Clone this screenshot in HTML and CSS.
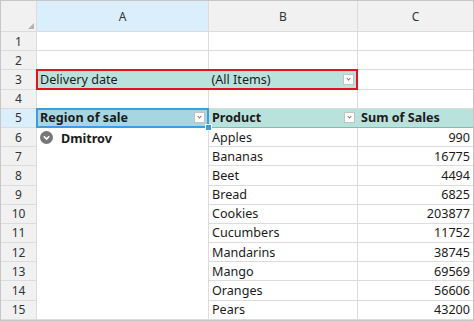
FILE: index.html
```html
<!DOCTYPE html>
<html lang="en">
<head>
    <meta charset="UTF-8">
    <title>Pivot table</title>
    <link rel="stylesheet" href="styles.css">
</head>
<body>
    <div class="sheet">
        <!-- column headers -->
        <div class="corner"></div>
        <div class="col-head active">A</div>
        <div class="col-head">B</div>
        <div class="col-head">C</div>

        <!-- rows 1-2 -->
        <div class="row-head">1</div><div class="cell"></div><div class="cell"></div><div class="cell"></div>
        <div class="row-head">2</div><div class="cell"></div><div class="cell"></div><div class="cell"></div>

        <!-- row 3: report filter -->
        <div class="row-head">3</div>
        <div class="cell filter span2">
            <div class="part part-a">Delivery date</div>
            <div class="part part-b">(All Items)<span class="drop"></span></div>
        </div>
        <div class="cell"></div>

        <!-- row 4 -->
        <div class="row-head">4</div><div class="cell"></div><div class="cell"></div><div class="cell"></div>

        <!-- row 5: pivot headers -->
        <div class="row-head active">5</div>
        <div class="cell pivot-head selected">Region of sale<span class="drop"></span><span class="handle"></span></div>
        <div class="cell pivot-head span2">
            <div class="part part-b">Product<span class="drop"></span></div>
            <div class="part">Sum of Sales</div>
        </div>

        <!-- rows 6-15 -->
        <div class="row-head">6</div>
        <div class="cell region">
            <span class="toggle">
                <svg width="13" height="13" viewBox="0 0 13 13"><circle cx="6.5" cy="6.5" r="6.5" fill="#777"/><path d="M3.8 5.3 L6.5 8 L9.2 5.3" fill="none" stroke="#fff" stroke-width="1.6"/></svg>
            </span>
            <b>Dmitrov</b>
        </div>
        <div class="cell">Apples</div><div class="cell num">990</div>
        <div class="row-head">7</div><div class="cell">Bananas</div><div class="cell num">16775</div>
        <div class="row-head">8</div><div class="cell">Beet</div><div class="cell num">4494</div>
        <div class="row-head">9</div><div class="cell">Bread</div><div class="cell num">6825</div>
        <div class="row-head">10</div><div class="cell">Cookies</div><div class="cell num">203877</div>
        <div class="row-head">11</div><div class="cell">Cucumbers</div><div class="cell num">11752</div>
        <div class="row-head">12</div><div class="cell">Mandarins</div><div class="cell num">38745</div>
        <div class="row-head">13</div><div class="cell">Mango</div><div class="cell num">69569</div>
        <div class="row-head">14</div><div class="cell">Oranges</div><div class="cell num">56606</div>
        <div class="row-head">15</div><div class="cell">Pears</div><div class="cell num">43200</div>
    </div>
</body>
</html>
```

FILE: styles.css
```css
body {
    margin: 0;
    font-family: 'Noto Sans', sans-serif;
    font-size: 12.6px;
    color: #1b1b1b;
    background: #c9c9c9;
}

.sheet {
    display: grid;
    grid-template-columns: 35px 171px 148px 115px;
    grid-template-rows: 30px repeat(15, 18.2px);
    gap: 1px;
    background: #dcdcdc;
    border: 1px solid #c6c6c6;
    height: 319px;
}

.corner,
.col-head,
.row-head {
    background: #f1f1f1;
    color: #333;
    display: flex;
    align-items: center;
    justify-content: center;
    font-size: 12px;
}

.corner {
    position: relative;
}

.corner::after {
    content: '';
    position: absolute;
    right: 2px;
    bottom: 2px;
    border-left: 6px solid transparent;
    border-bottom: 6px solid #b4b4b4;
}

.col-head.active,
.row-head.active {
    background: #dbeefc;
}

.cell {
    background: #fff;
    display: flex;
    align-items: center;
    padding: 0 3px;
    white-space: nowrap;
    position: relative;
}

.num {
    justify-content: flex-end;
}

.span2 {
    grid-column: span 2;
    padding: 0;
}

.part {
    display: flex;
    align-items: center;
    padding: 0 3px;
    height: 100%;
}

.part-a {
    width: 166px;
}

.part-b {
    width: 143px;
    justify-content: space-between;
}

.filter {
    background: #b9e2dc;
    outline: 2px solid #e2131f;
    outline-offset: -1px;
    z-index: 1;
}

.pivot-head {
    background: #b9e2dc;
    font-weight: bold;
    box-shadow: 0 1px 0 #7fbdb3;
}

.selected {
    background: #a6d6e2;
    outline: 2px solid #3e9ce2;
    outline-offset: -1px;
    z-index: 2;
    justify-content: space-between;
}

.drop {
    width: 9px;
    height: 9px;
    border: 1px solid #c2c2c2;
    background: #fff;
    position: relative;
}

.drop::after {
    content: '';
    position: absolute;
    left: 3px;
    top: 2px;
    width: 2px;
    height: 2px;
    border-right: 1px solid #777;
    border-bottom: 1px solid #777;
    transform: rotate(45deg);
}

.handle {
    position: absolute;
    right: -4px;
    bottom: -4px;
    width: 5px;
    height: 5px;
    background: #3e9ce2;
    border: 1px solid #fff;
}

.region {
    grid-row: span 10;
    align-items: flex-start;
    padding-top: 2px;
}

.toggle {
    display: flex;
    margin: 1px 8px 0 0;
}

.region b {
    font-weight: bold;
}
```
